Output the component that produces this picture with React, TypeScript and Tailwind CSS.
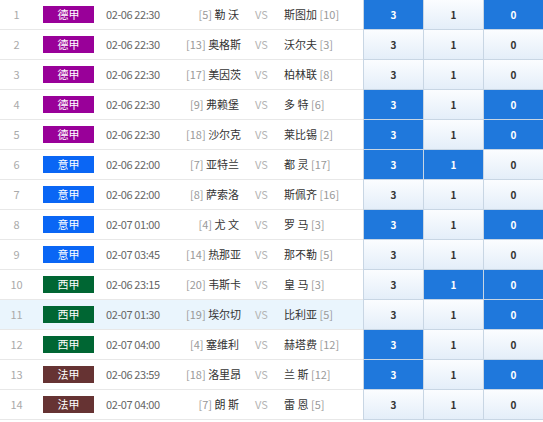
import React from "react";

type Row = {
  n: number;
  lg: string;
  t: string;
  hr: string;
  h: string;
  a: string;
  ar: string;
  hl: [boolean, boolean, boolean];
};

const LG: Record<string, string> = {
  德甲: "bg-[#990099]",
  意甲: "bg-[#0a66f5]",
  西甲: "bg-[#006633]",
  法甲: "bg-[#663333]",
};

const rows: Row[] = [
  { n: 1, lg: "德甲", t: "02-06 22:30", hr: "[5]", h: "勒 沃", a: "斯图加", ar: "[10]", hl: [true, false, true] },
  { n: 2, lg: "德甲", t: "02-06 22:30", hr: "[13]", h: "奥格斯", a: "沃尔夫", ar: "[3]", hl: [false, false, false] },
  { n: 3, lg: "德甲", t: "02-06 22:30", hr: "[17]", h: "美因茨", a: "柏林联", ar: "[8]", hl: [false, false, false] },
  { n: 4, lg: "德甲", t: "02-06 22:30", hr: "[9]", h: "弗赖堡", a: "多 特", ar: "[6]", hl: [true, false, true] },
  { n: 5, lg: "德甲", t: "02-06 22:30", hr: "[18]", h: "沙尔克", a: "莱比锡", ar: "[2]", hl: [true, false, true] },
  { n: 6, lg: "意甲", t: "02-06 22:00", hr: "[7]", h: "亚特兰", a: "都 灵", ar: "[17]", hl: [true, true, false] },
  { n: 7, lg: "意甲", t: "02-06 22:00", hr: "[8]", h: "萨索洛", a: "斯佩齐", ar: "[16]", hl: [false, false, false] },
  { n: 8, lg: "意甲", t: "02-07 01:00", hr: "[4]", h: "尤 文", a: "罗 马", ar: "[3]", hl: [true, false, true] },
  { n: 9, lg: "意甲", t: "02-07 03:45", hr: "[14]", h: "热那亚", a: "那不勒", ar: "[5]", hl: [false, false, false] },
  { n: 10, lg: "西甲", t: "02-06 23:15", hr: "[20]", h: "韦斯卡", a: "皇 马", ar: "[3]", hl: [false, true, true] },
  { n: 11, lg: "西甲", t: "02-07 01:30", hr: "[19]", h: "埃尔切", a: "比利亚", ar: "[5]", hl: [false, false, true] },
  { n: 12, lg: "西甲", t: "02-07 04:00", hr: "[4]", h: "塞维利", a: "赫塔费", ar: "[12]", hl: [true, false, false] },
  { n: 13, lg: "法甲", t: "02-06 23:59", hr: "[18]", h: "洛里昂", a: "兰 斯", ar: "[12]", hl: [true, false, true] },
  { n: 14, lg: "法甲", t: "02-07 04:00", hr: "[7]", h: "朗 斯", a: "雷 恩", ar: "[5]", hl: [false, false, false] },
];

const vals = ["3", "1", "0"];

export default function App() {
  return (
    <div
      className="w-[543px] h-[422px] bg-white overflow-hidden text-[11px]"
      style={{ fontFamily: '"Noto Sans CJK SC", "Noto Sans", sans-serif' }}
    >
      {rows.map((r) => (
        <div
          key={r.n}
          className={`flex h-[30px] ${r.n === 11 ? "bg-[#eaf5fd]" : "bg-white"}`}
        >
          <div className="flex w-[363px] items-center border-b border-[#e8e8e8]">
            <div className="w-[33px] text-center text-[#aaa]">{r.n}</div>
            <div className="w-[73px] pl-[10px]">
              <div className={`flex h-[17px] w-[51px] items-center justify-center text-white ${LG[r.lg]}`}>
                {r.lg}
              </div>
            </div>
            <div className="w-[80px] tracking-[-0.4px] text-[#666]">{r.t}</div>
            <div className="w-[53px] whitespace-nowrap text-right">
              <span className="text-[#999]">{r.hr}</span>{" "}
              <span className="text-[#333]">{r.h}</span>
            </div>
            <div className="w-[45px] text-center text-[#b5b5b5]">VS</div>
            <div className="whitespace-nowrap">
              <span className="text-[#333]">{r.a}</span>{" "}
              <span className="text-[#999]">{r.ar}</span>
            </div>
          </div>
          {vals.map((v, i) => (
            <div
              key={i}
              className={`flex w-[60px] items-center justify-center border-b border-l border-[#c8d6e4] text-[10px] font-bold ${
                r.hl[i]
                  ? "bg-[#1f78dc] text-white"
                  : "bg-gradient-to-b from-[#fbfdff] to-[#e4eef9] text-[#333]"
              }`}
            >
              {v}
            </div>
          ))}
        </div>
      ))}
    </div>
  );
}
